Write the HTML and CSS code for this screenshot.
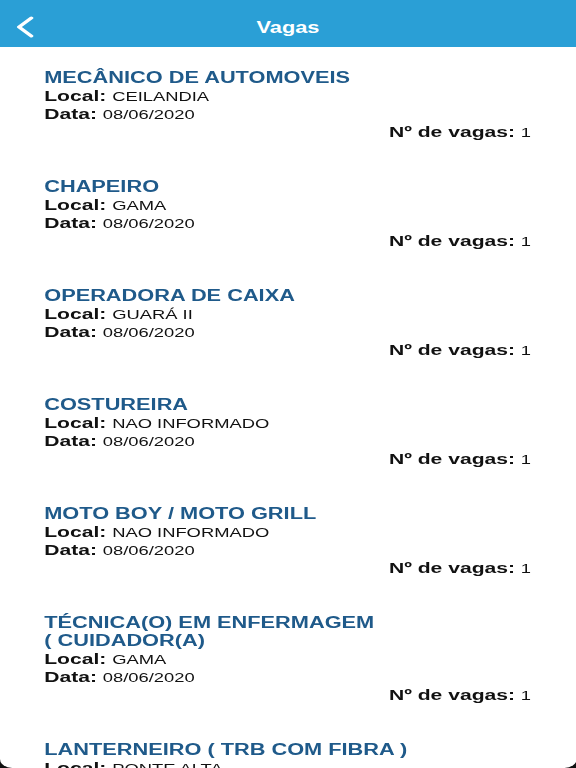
FILE: index.html
```html
<!DOCTYPE html>
<html lang="pt-BR">
<head>
    <meta charset="UTF-8">
    <meta name="viewport" content="width=device-width, initial-scale=1.0">
    <title>Vagas</title>
    <link rel="stylesheet" href="styles.css">
</head>
<body>
    <div class="screen">
        <header class="topo">
            <button type="button" class="voltar" aria-label="Voltar">
                <svg width="14" height="22" viewBox="0 0 14 22">
                    <path d="M12 2 L3 11 L12 20" fill="none" stroke="#fff" stroke-width="3" stroke-linecap="round" stroke-linejoin="round"/>
                </svg>
            </button>
            <h1 class="titulo">Vagas</h1>
        </header>
        <main class="lista">
            <div class="vaga">
                <h2 class="cargo">MECÂNICO DE AUTOMOVEIS</h2>
                <p class="linha"><b>Local:</b> <span class="valor">CEILANDIA</span></p>
                <p class="linha"><b>Data:</b> <span class="valor">08/06/2020</span></p>
                <p class="linha qtd"><b>Nº de vagas:</b> <span class="valor">1</span></p>
            </div>
            <div class="vaga">
                <h2 class="cargo">CHAPEIRO</h2>
                <p class="linha"><b>Local:</b> <span class="valor">GAMA</span></p>
                <p class="linha"><b>Data:</b> <span class="valor">08/06/2020</span></p>
                <p class="linha qtd"><b>Nº de vagas:</b> <span class="valor">1</span></p>
            </div>
            <div class="vaga">
                <h2 class="cargo">OPERADORA DE CAIXA</h2>
                <p class="linha"><b>Local:</b> <span class="valor">GUARÁ II</span></p>
                <p class="linha"><b>Data:</b> <span class="valor">08/06/2020</span></p>
                <p class="linha qtd"><b>Nº de vagas:</b> <span class="valor">1</span></p>
            </div>
            <div class="vaga">
                <h2 class="cargo">COSTUREIRA</h2>
                <p class="linha"><b>Local:</b> <span class="valor">NAO INFORMADO</span></p>
                <p class="linha"><b>Data:</b> <span class="valor">08/06/2020</span></p>
                <p class="linha qtd"><b>Nº de vagas:</b> <span class="valor">1</span></p>
            </div>
            <div class="vaga">
                <h2 class="cargo">MOTO BOY / MOTO GRILL</h2>
                <p class="linha"><b>Local:</b> <span class="valor">NAO INFORMADO</span></p>
                <p class="linha"><b>Data:</b> <span class="valor">08/06/2020</span></p>
                <p class="linha qtd"><b>Nº de vagas:</b> <span class="valor">1</span></p>
            </div>
            <div class="vaga">
                <h2 class="cargo">TÉCNICA(O) EM ENFERMAGEM<br>( CUIDADOR(A)</h2>
                <p class="linha"><b>Local:</b> <span class="valor">GAMA</span></p>
                <p class="linha"><b>Data:</b> <span class="valor">08/06/2020</span></p>
                <p class="linha qtd"><b>Nº de vagas:</b> <span class="valor">1</span></p>
            </div>
            <div class="vaga">
                <h2 class="cargo">LANTERNEIRO ( TRB COM FIBRA )</h2>
                <p class="linha"><b>Local:</b> <span class="valor">PONTE ALTA</span></p>
                <p class="linha"><b>Data:</b> <span class="valor">08/06/2020</span></p>
                <p class="linha qtd"><b>Nº de vagas:</b> <span class="valor">1</span></p>
            </div>
        </main>
    </div>
</body>
</html>
```

FILE: styles.css
```css
html, body
{
    margin: 0;
    height: 100%;
    overflow: hidden;
    background: #111;
}
/* o app aparece esticado na horizontal, como no iPad */
.screen
{
    width: 423.5px;
    height: 768px;
    overflow: hidden;
    background: #fff;
    border-radius: 0 0 9px 9px;
    transform: scaleX(1.36);
    transform-origin: 0 0;
    font-family: "Liberation Sans", Arial, sans-serif;
    color: #111;
}
.topo
{
    height: 47px;
    box-sizing: border-box;
    padding-top: 8px;
    background: #2a9fd6;
    display: flex;
    align-items: center;
    justify-content: center;
    position: relative;
}
.voltar
{
    position: absolute;
    left: 11px;
    top: 16px;
    padding: 0;
    border: 0;
    background: none;
    display: flex;
}
.titulo
{
    margin: 0;
    font-size: 16px;
    font-weight: bold;
    color: #fff;
}
.lista
{
    padding: 22px 33px 0 32.5px;
}
.vaga
{
    margin-bottom: 37px;
}
.cargo
{
    margin: 0;
    font-size: 16px;
    line-height: 18px;
    font-weight: bold;
    color: #1f5a8a;
}
.linha
{
    margin: 0;
    height: 18px;
    font-size: 15.5px;
    line-height: 18px;
}
.valor
{
    font-size: 13.5px;
    line-height: 1;
}
.qtd
{
    text-align: right;
}
```
